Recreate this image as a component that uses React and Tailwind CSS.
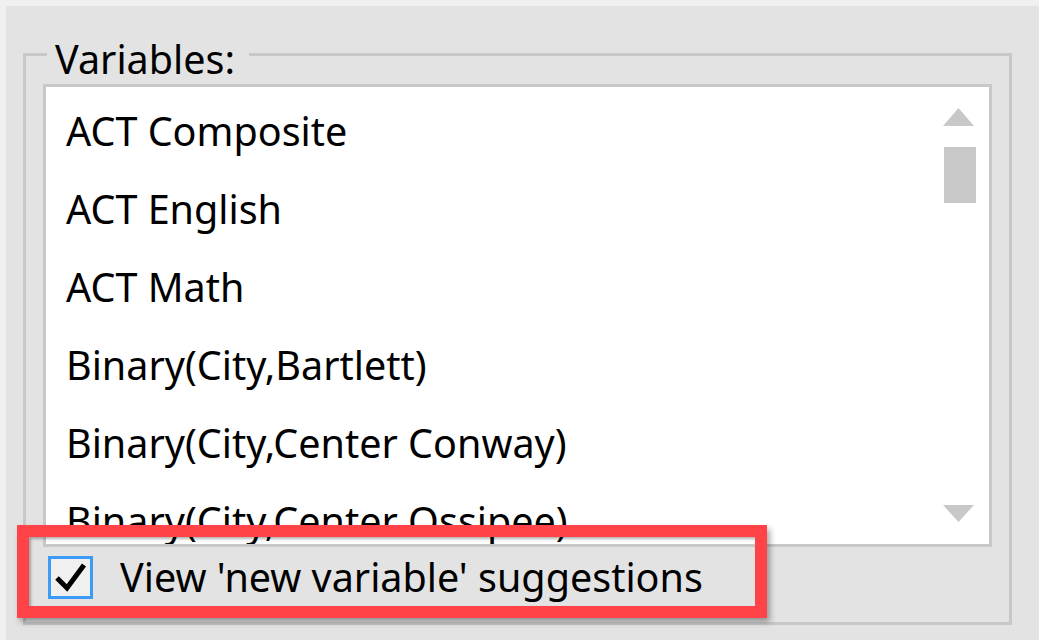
import React from 'react';

const variables = [
    'ACT Composite',
    'ACT English',
    'ACT Math',
    'Binary(City,Bartlett)',
    'Binary(City,Center Conway)',
    'Binary(City,Center Ossipee)',
    'Binary(City,Conway)',
];

const font = { fontFamily: '"Noto Sans", "Open Sans", sans-serif' };

export default function App() {
    return (
        <div className="relative w-[1039px] h-[640px] overflow-hidden bg-[#f0f0f0] text-black" style={font}>
            {/* Dialog panel */}
            <div className="ml-[6px] mt-[6px] h-[634px] bg-[#e3e3e3] pl-[17px] pt-[47px]">
                {/* Group box */}
                <div className="relative w-[989px] h-[572px] border-[3px] border-[#c8c8c8] px-[17px] pt-[28px]">
                    <span className="absolute left-[21px] top-[-21px] bg-[#e3e3e3] pl-[8px] pr-[14px] text-[39.5px] leading-[48px]">
                        Variables:
                    </span>

                    {/* List box */}
                    <div className="flex w-[949px] h-[463px] border-[3px] border-[#c8c8c8] bg-white">
                        <div className="flex-1 overflow-hidden pt-[5px] pl-[20px]">
                            {variables.map((name) => (
                                <div key={name} className="h-[78px] text-[39.5px] leading-[78px] whitespace-nowrap">
                                    {name}
                                </div>
                            ))}
                        </div>

                        {/* Scrollbar */}
                        <div className="flex w-[34px] mr-[12px] flex-col items-start pt-[21px] pb-[22px]">
                            <svg width="31" height="18" viewBox="0 0 31 18">
                                <path d="M15.5 0 L31 18 L0 18 Z" fill="#c8c8c8" />
                            </svg>
                            <div className="ml-[1px] mt-[21px] w-[32px] h-[56px] bg-[#c8c8c8]" />
                            <div className="flex-1" />
                            <svg width="31" height="17" viewBox="0 0 31 17">
                                <path d="M0 0 L31 0 L15.5 17 Z" fill="#c8c8c8" />
                            </svg>
                        </div>
                    </div>

                    {/* Checkbox row */}
                    <div className="mt-[6px] ml-[5px] flex items-center gap-[27px]">
                        <div className="flex w-[45px] h-[43px] items-center justify-center border-[3px] border-[#3c9bf6] bg-[#f0f0f0]">
                            <svg width="33" height="30" viewBox="0 0 33 30">
                                <path d="M3 16 L13 26 L30 3" fill="none" stroke="#000" strokeWidth="5" />
                            </svg>
                        </div>
                        <span className="text-[39.5px] leading-[48px] whitespace-nowrap">View 'new variable' suggestions</span>
                    </div>
                </div>
            </div>

            {/* Annotation highlight */}
            <div className="absolute left-[17px] top-[525px] w-[750px] h-[93px] border-[12px] border-[#ff4347] shadow-[3px_4px_6px_rgba(0,0,0,0.35),inset_2px_2px_3px_rgba(0,0,0,0.3)]" />
        </div>
    );
}
